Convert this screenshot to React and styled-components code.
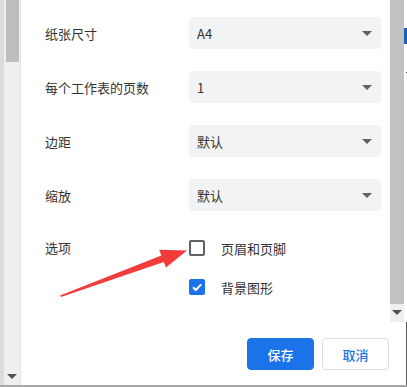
import React from 'react';
import styled, { createGlobalStyle } from 'styled-components';

const GlobalStyle = createGlobalStyle`
    body{
        margin: 0;
        font-family: "Noto Sans CJK SC", "Liberation Sans", sans-serif;
        background: #ffffff;
    }
`

const rows = [
    { label: '纸张尺寸', value: 'A4' },
    { label: '每个工作表的页数', value: '1' },
    { label: '边距', value: '默认' },
    { label: '缩放', value: '默认' },
];

const App = () => {
    return (
        <Page>
            <GlobalStyle />
            <LeftEdge />
            <LeftScroll>
                <Thumb height={62} />
                <ArrowDown />
            </LeftScroll>
            <Dialog>
                <ScrollArea>
                    <Content>
                        {rows.map((r) => (
                            <Row key={r.label}>
                                <Label>{r.label}</Label>
                                <Select>
                                    <span>{r.value}</span>
                                    <Caret />
                                </Select>
                            </Row>
                        ))}
                        <OptionsRow>
                            <Label>选项</Label>
                            <Options>
                                <Option>
                                    <Check />
                                    <span>页眉和页脚</span>
                                </Option>
                                <Option>
                                    <Check checked>
                                        <svg width="12" height="12" viewBox="0 0 12 12">
                                            <path d="M2 6.2 L4.8 9 L10.2 3.4" fill="none" stroke="#fff" strokeWidth="2" />
                                        </svg>
                                    </Check>
                                    <span>背景图形</span>
                                </Option>
                            </Options>
                        </OptionsRow>
                    </Content>
                    <RightScroll>
                        <Thumb height={304} />
                        <ArrowDown />
                    </RightScroll>
                </ScrollArea>
                <Footer>
                    <Button primary>保存</Button>
                    <Button>取消</Button>
                </Footer>
            </Dialog>
            <RightEdge>
                <BlueBit />
                <Tick />
                <EdgeLine />
            </RightEdge>
            <Pointer width="407" height="387" viewBox="0 0 407 387">
                <polygon
                    points="60,295.5 161.3,255.4 159.2,249.8 187,250.5 166,267.5 163.8,262 61,297"
                    fill="#f23b3b"
                />
            </Pointer>
        </Page>
    )
}

const Page = styled.div`
    position: relative;
    display: flex;
    width: 407px;
    height: 385px;
    border-bottom: 2px solid #a8a8a8;
    overflow: hidden;
`

const LeftEdge = styled.div`
    width: 4px;
    background: #dadce0;
`

const LeftScroll = styled.div`
    width: 17px;
    background: #efefef;
    border-right: 1px solid #e4e4e4;
    display: flex;
    flex-direction: column;
    align-items: center;
    justify-content: space-between;
    padding-bottom: 6px;
    box-sizing: border-box;
`

const Thumb = styled.div`
    width: 13px;
    height: ${(p) => p.height}px;
    background: #bdbdbd;
`

const ArrowDown = styled.div`
    width: 0;
    height: 0;
    border-left: 5px solid transparent;
    border-right: 5px solid transparent;
    border-top: 5px solid #505050;
`

const Dialog = styled.div`
    width: 383px;
    display: flex;
    flex-direction: column;
    background: #fff;
`

const ScrollArea = styled.div`
    height: 322px;
    display: flex;
`

const Content = styled.div`
    flex: 1;
    padding: 17px 9px 0 24px;
    display: flex;
    flex-direction: column;
    gap: 22px;
`

const Row = styled.div`
    display: flex;
    align-items: center;
`

const Label = styled.div`
    width: 144px;
    flex-shrink: 0;
    font-size: 13px;
    color: #333;
`

const Select = styled.div`
    flex: 1;
    height: 32px;
    border-radius: 4px;
    background: #f1f3f4;
    display: flex;
    align-items: center;
    justify-content: space-between;
    padding: 0 9px 0 8px;
    font-size: 13px;
    color: #333;
`

const Caret = styled.div`
    width: 0;
    height: 0;
    border-left: 5px solid transparent;
    border-right: 5px solid transparent;
    border-top: 5px solid #5f6368;
`

const OptionsRow = styled.div`
    display: flex;
    align-items: flex-start;
    margin-top: -1px;
    ${Label}{
        line-height: 32px;
    }
`

const Options = styled.div`
    display: flex;
    flex-direction: column;
    gap: 7px;
`

const Option = styled.div`
    height: 32px;
    display: flex;
    align-items: center;
    gap: 16px;
    font-size: 13px;
    color: #333;
`

const Check = styled.div`
    width: 16px;
    height: 16px;
    box-sizing: border-box;
    border-radius: 2px;
    border: 2px solid ${(p) => (p.checked ? '#1a73e8' : '#5f6368')};
    background: ${(p) => (p.checked ? '#1a73e8' : '#fff')};
    display: flex;
    align-items: center;
    justify-content: center;
`

const RightScroll = styled.div`
    width: 14px;
    background: #efefef;
    display: flex;
    flex-direction: column;
    align-items: center;
    gap: 6px;
    ${Thumb}{
        width: 14px;
        background: #c1c1c1;
    }
`

const Footer = styled.div`
    display: flex;
    justify-content: flex-end;
    gap: 8px;
    padding: 16px 15px 0 0;
`

const Button = styled.button`
    width: 67px;
    height: 32px;
    border-radius: 4px;
    box-sizing: border-box;
    font-family: inherit;
    font-size: 13px;
    font-weight: 500;
    border: 1px solid ${(p) => (p.primary ? '#1a73e8' : '#dadce0')};
    background: ${(p) => (p.primary ? '#1a73e8' : '#fff')};
    color: ${(p) => (p.primary ? '#fff' : '#1a73e8')};
`

const RightEdge = styled.div`
    flex: 1;
    background: #fff;
    display: flex;
    flex-direction: column;
    align-items: flex-end;
    padding-top: 28px;
`

const BlueBit = styled.div`
    width: 100%;
    height: 16px;
    background: #1a5fb4;
`

const Tick = styled.div`
    width: 1px;
    height: 1px;
    margin-top: 28px;
    background: #333;
`

const EdgeLine = styled.div`
    width: 1px;
    margin-top: auto;
    height: 63px;
    background: #5a5a5a;
`

const Pointer = styled.svg`
    position: absolute;
    left: 0;
    top: 0;
    pointer-events: none;
`

export default App;
